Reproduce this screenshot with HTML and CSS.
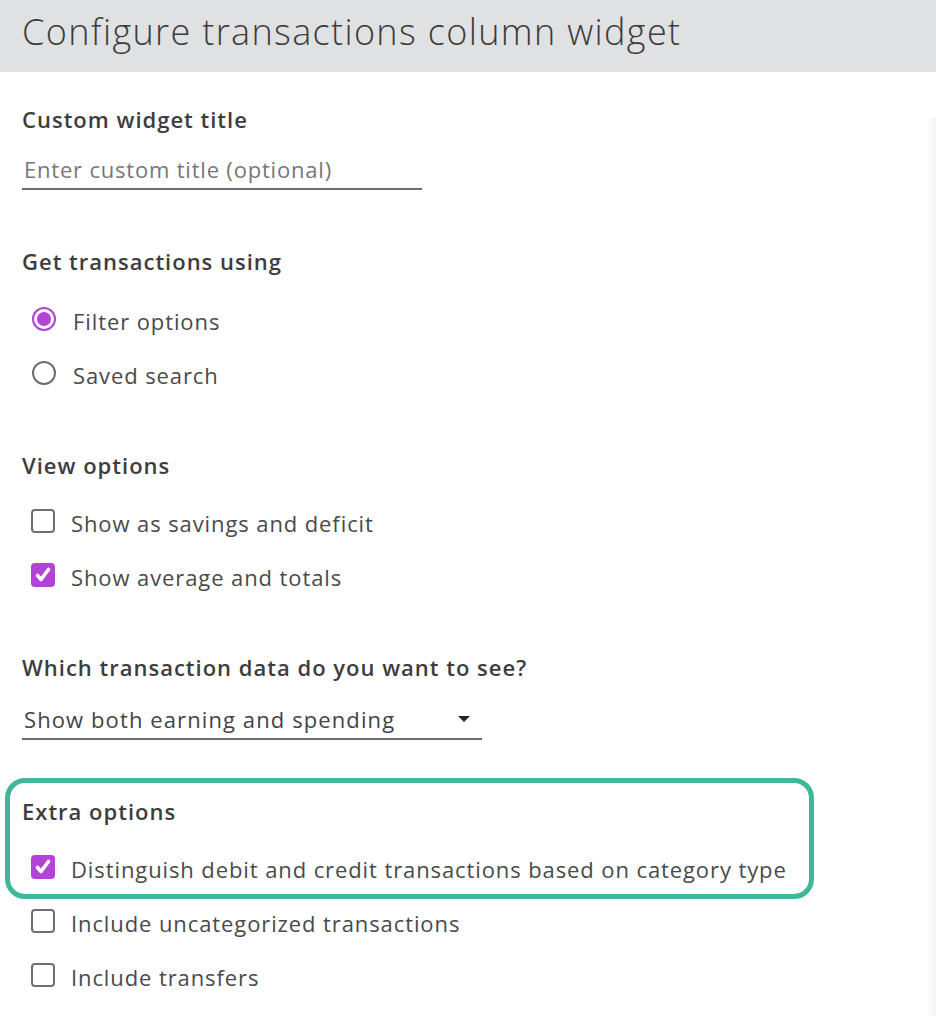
FILE: index.html
```html
<!DOCTYPE html>
<html lang="en">
<head>
<meta charset="utf-8">
<title>Configure transactions column widget</title>
<link rel="stylesheet" href="styles.css">
</head>
<body>
<header class="header">
  <h1 class="title">Configure transactions column widget</h1>
</header>
<main class="content">
  <section class="section s-title">
    <h2 class="heading">Custom widget title</h2>
    <div class="text-input"><span class="placeholder">Enter custom title (optional)</span></div>
  </section>

  <section class="section s-get">
    <h2 class="heading">Get transactions using</h2>
    <div class="options">
      <div class="option"><span class="radio checked"></span><span class="label">Filter options</span></div>
      <div class="option"><span class="radio"></span><span class="label">Saved search</span></div>
    </div>
  </section>

  <section class="section s-view">
    <h2 class="heading">View options</h2>
    <div class="options">
      <div class="option"><span class="check"></span><span class="label">Show as savings and deficit</span></div>
      <div class="option"><span class="check checked"><svg viewBox="0 0 24 24" width="24" height="24"><path d="M6.5 12.5l3.5 4 7.5-10" fill="none" stroke="#fff" stroke-width="3.6" stroke-linecap="round" stroke-linejoin="round"/></svg></span><span class="label">Show average and totals</span></div>
    </div>
  </section>

  <section class="section s-data">
    <h2 class="heading">Which transaction data do you want to see?</h2>
    <div class="select"><span class="select-value">Show both earning and spending</span><span class="caret"></span></div>
  </section>

  <section class="section s-extra">
    <div class="highlight"></div>
    <h2 class="heading">Extra options</h2>
    <div class="options">
      <div class="option"><span class="check checked"><svg viewBox="0 0 24 24" width="24" height="24"><path d="M6.5 12.5l3.5 4 7.5-10" fill="none" stroke="#fff" stroke-width="3.6" stroke-linecap="round" stroke-linejoin="round"/></svg></span><span class="label">Distinguish debit and credit transactions based on category type</span></div>
      <div class="option"><span class="check"></span><span class="label">Include uncategorized transactions</span></div>
      <div class="option"><span class="check"></span><span class="label">Include transfers</span></div>
    </div>
  </section>
</main>
<div class="edge-shadow"></div>
</body>
</html>
```
FILE: styles.css
```css
* { box-sizing: border-box; }
html, body { margin: 0; padding: 0; }
body {
  width: 936px;
  height: 1016px;
  overflow: hidden;
  background: #fff;
  font-family: "Open Sans", "Lato", sans-serif;
  color: #474747;
  position: relative;
}
.header {
  height: 72px;
  background: #e0e1e3;
  padding: 0 22px;
  display: flex;
  align-items: center;
}
.title {
  margin: 0 0 8px 0;
  font-size: 36px;
  font-weight: 300;
  color: #3b3b3b;
  line-height: 42px;
  letter-spacing: 1.35px;
  white-space: nowrap;
}
.content {
  padding: 0 22px;
}
.section { position: relative; }
.heading {
  margin: 0;
  font-size: 22px;
  line-height: 28px;
  padding-bottom: 2px;
  font-weight: 600;
  color: #3d3d3d;
  letter-spacing: 1px;
}
.s-title { padding-top: 33px; }
.s-get { padding-top: 57px; }
.s-view { padding-top: 51px; }
.s-data { padding-top: 51px; }
.s-extra { padding-top: 57px; }

.text-input {
  margin-top: 19px;
  width: 400px;
  height: 36px;
  border-bottom: 2px solid #6d6d6d;
  padding: 0 2px;
  display: flex;
  align-items: flex-start;
}
.placeholder {
  font-size: 22px;
  line-height: 30px;
  color: #777;
  letter-spacing: 0.8px;
}
.options { display: flex; flex-direction: column; }
.s-get .options { margin-top: 15px; }
.s-view .options, .s-extra .options { margin-top: 13px; }
.option {
  height: 54px;
  display: flex;
  align-items: center;
  padding-left: 9px;
}
.label {
  font-size: 22px;
  line-height: 30px;
  margin-left: 16px;
  padding-top: 4px;
  color: #4a4a4a;
  letter-spacing: 0.9px;
  white-space: nowrap;
}
.radio {
  width: 24px;
  height: 24px;
  border-radius: 50%;
  border: 2px solid #6e6e6e;
  margin-left: 1px;
  margin-right: 1px;
  display: flex;
  align-items: center;
  justify-content: center;
  flex: none;
}
.radio.checked { border-color: #b342d8; }
.radio.checked::after {
  content: "";
  width: 14px;
  height: 14px;
  border-radius: 50%;
  background: #b342d8;
}
.check {
  width: 24px;
  height: 24px;
  border-radius: 4px;
  border: 2px solid #6e6e6e;
  flex: none;
  display: flex;
}
.check.checked {
  border: none;
  background: #b342d8;
}
.select {
  margin-top: 21px;
  width: 460px;
  height: 36px;
  border-bottom: 2px solid #6d6d6d;
  display: flex;
  justify-content: space-between;
  align-items: flex-start;
  padding: 0 12px 0 2px;
}
.select-value {
  font-size: 22px;
  line-height: 30px;
  color: #444;
  letter-spacing: 1.1px;
}
.caret {
  margin-top: 12px;
  width: 0;
  height: 0;
  border-left: 6px solid transparent;
  border-right: 6px solid transparent;
  border-top: 6px solid #222;
}
.highlight {
  position: absolute;
  left: -17px;
  top: 38px;
  width: 809px;
  height: 121px;
  border: 5px solid #41b69a;
  border-radius: 20px;
  pointer-events: none;
}
.edge-shadow {
  position: absolute;
  right: 0;
  top: 118px;
  bottom: 0;
  width: 10px;
  background: linear-gradient(to right, rgba(0,0,0,0), rgba(0,0,0,0.05));
}
```
